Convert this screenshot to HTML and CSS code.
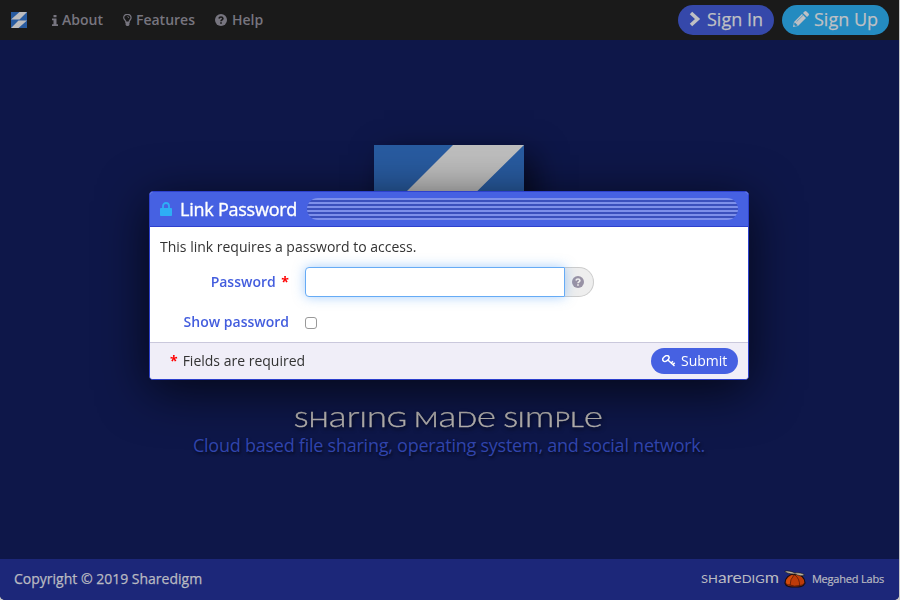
FILE: index.html
```html
<!DOCTYPE html>
<html lang="en">
<head>
<meta charset="utf-8">
<title>Sharedigm</title>
<link rel="stylesheet" href="styles.css">
</head>
<body>
<div class="page">
  <header class="navbar">
    <svg class="brand" viewBox="0 0 16 16"><rect width="16" height="16" fill="#285ba0"/><path d="M8.500 0H16L8.500 7.500H0zM7.500 8.500H16L7.500 16H0z" fill="#bcbcbe"/></svg>
    <nav class="menu">
      <a><svg class="i-info" viewBox="0 0 6 11"><path d="M1.500 0h3v2.200h-3zM0 3.500h4.500v5.800H6V11H0V9.300h1.500V5.200H0z"/></svg>About</a>
      <a><svg class="i-bulb" viewBox="0 0 9 12"><path d="M3 8.300C3 6.300.7 5.700.7 3.700a3.600 3.300 0 0 1 7.400 0C8.100 5.700 6 6.300 6 8.300z" fill="none" stroke="currentColor" stroke-width="1.200"/><path d="M2.600 7.700h3.800v3.200L5.300 12H3.700L2.600 10.900zM4.300 2.200q1.800 0 1.900 1.700h-.7Q5.300 3 4.300 3z"/></svg>Features</a>
      <a><svg class="i-help" viewBox="0 0 12 12"><circle cx="6" cy="6" r="6"/><path d="M4 4.500Q4.300 3 6 3t1.900 1.500C7.900 5.900 6 5.800 6 7.300M6 8.300v1.500" fill="none" stroke="#1a1a1a" stroke-width="1.700"/></svg>Help</a>
    </nav>
    <div class="actions">
      <a class="pill in"><svg class="i-chev" viewBox="0 0 12 16"><path d="M2 2l6.500 6L2 14" fill="none" stroke="currentColor" stroke-width="3.600"/></svg>Sign In</a>
      <a class="pill up"><svg class="i-pen" viewBox="0 0 16 16"><path d="M0 16l1-5L9 3l4 4-8 8zM10 2l1.500-1.500q1-1 2 0l2 2q1 1 0 2L14 6z"/><path d="M1.800 11.700l2.600 2.600-2 .6-1.200-1.200zM3.500 10.700L10 4.300" fill="#248bc0" stroke="#248bc0" stroke-width=".6"/></svg>Sign Up</a>
    </div>
  </header>

  <main class="hero">
    <svg class="logo" viewBox="0 0 150 150"><rect width="150" height="150" fill="#285ba0"/><path d="M79 0H150L75 74H5zM75 76H146L71 150H0z" fill="#bebebe"/></svg>
    <svg class="tagline" viewBox="0 0 312 32"><text x="1" y="23.500" textLength="309" lengthAdjust="spacingAndGlyphs"><tspan class="cap">Sh</tspan><tspan>ar</tspan><tspan class="cap">i</tspan><tspan>n</tspan><tspan class="cap">g</tspan><tspan class="cap"> M</tspan><tspan>a</tspan><tspan class="cap">d</tspan><tspan>e</tspan><tspan class="cap"> Si</tspan><tspan>m</tspan><tspan class="cap">pl</tspan><tspan>e</tspan></text></svg>
    <p class="sub">Cloud based file sharing, operating system, and social network.</p>
  </main>

  <footer class="footer">
    <span class="copy">Copyright © 2019 Sharedigm</span>
    <div class="credits">
      <svg class="wordmark" viewBox="0 0 80 16"><text x="1" y="12" textLength="78" lengthAdjust="spacingAndGlyphs"><tspan class="cap">Sh</tspan><tspan>are</tspan><tspan class="cap">dig</tspan><tspan>m</tspan></text></svg>
      <svg class="beanie" viewBox="0 0 22 18"><path d="M1 13C1 8 5 4 11 4s10 4 10 9c-2 4-5 4-10 4S2 17 1 13z" fill="#bd3b08" stroke="#150c10" stroke-width="1.200"/><path d="M2 12C3 8 6 6 10 5c-3 3-4 6-4 10q-3 0-4-3z" fill="#d24b0b"/><path d="M10 5Q6 9 6 15.500M11 5q5 4 4.500 11" fill="none" stroke="#491508" stroke-width=".7"/><path d="M1.500 13.500q2 2 4.500 1.500 4 2 9.500.5 3 0 5-2" fill="none" stroke="#491508" stroke-width=".8"/><path d="M11 3.500v1.800" stroke="#111" stroke-width="1.500"/><path d="M.8 1.200C4 .3 8 1.500 11 3c4-.6 8 .2 9.500 2-2 1.400-6 .8-9.500-1C7 4 2 3.300.8 1.200z" fill="#bbb29c" stroke="#171514" stroke-width=".6"/></svg>
      <span class="labs">Megahed Labs</span>
    </div>
  </footer>
</div>

<div class="overlay">
  <form class="modal">
    <div class="modal-head">
      <svg class="i-lock" viewBox="0 0 12 14"><path d="M3 7V4a3 3 0 0 1 6 0v3" fill="none" stroke="currentColor" stroke-width="1.800"/><rect y="6" width="12" height="8" rx=".8"/></svg>
      <h1>Link Password</h1>
      <div class="stripes"></div>
    </div>
    <div class="modal-body">
      <p>This link requires a password to access.</p>
      <div class="row">
        <label>Password <b class="req">*</b></label>
        <div class="group"><input class="field" type="password"><span class="addon"><svg class="i-help" viewBox="0 0 12 12"><circle cx="6" cy="6" r="6"/><path d="M4 4.500Q4.300 3 6 3t1.900 1.500C7.900 5.900 6 5.800 6 7.300M6 8.300v1.500" fill="none" stroke="#eee" stroke-width="1.700"/></svg></span></div>
      </div>
      <div class="row second">
        <label>Show password</label>
        <input class="check" type="checkbox">
      </div>
    </div>
    <div class="modal-foot">
      <span><b class="req">*</b>Fields are required</span>
      <button class="submit" type="button"><svg class="i-key" viewBox="0 0 14 12"><path d="M5.600 4.800L12.500 11M9.300 8l1.600-1.800M11 9.600l1.700-1.900" fill="none" stroke="currentColor" stroke-width="1.500"/><ellipse cx="3.900" cy="3.600" rx="3.500" ry="2.400" transform="rotate(-40 3.900 3.600)" fill="none" stroke="currentColor" stroke-width="1.500"/></svg>Submit</button>
    </div>
  </form>
</div>
</body>
</html>
```

FILE: styles.css
```css
* { box-sizing: border-box; }
html { background: #c9c9c9; }
body { margin: 0; font-family: "Open Sans", "Noto Sans", sans-serif; font-size: 14px; }
svg { fill: currentColor; flex: none; display: block; }
.page { width: 899px; height: 600px; display: flex; flex-direction: column; background: #0e1749; border-radius: 0 0 5px 5px; overflow: hidden; }
.navbar { height: 40px; background: #1a1a1a; display: flex; align-items: center; padding: 0 10px 0 11px; color: #77757f; }
.brand { width: 16px; height: 16px; }
.menu { display: flex; margin-left: 25px; gap: 20px; font-weight: 600; flex: 1; }
.menu a { display: flex; align-items: center; line-height: 20px; }
.i-info { width: 6px; height: 11px; margin-right: 4px; }
.i-bulb { width: 9px; height: 12px; margin-right: 4px; }
.i-help { width: 12px; height: 12px; }
.menu .i-help { margin-right: 5px; }
.actions { display: flex; gap: 8px; }
.pill { height: 30px; border-radius: 15px; display: flex; align-items: center; font-size: 18px; line-height: 26px; color: #bfc0c4; padding-bottom: 2px; -webkit-text-stroke: .25px #bfc0c4; }
.in { width: 96px; background: #3548aa; padding-left: 11px; }
.up { width: 107px; background: #248bc0; padding-left: 11px; }
.i-chev { width: 12px; height: 16px; margin-right: 6px; }
.i-pen { width: 16px; height: 16px; margin-right: 5px; }
.hero { flex: 1; width: 898px; display: flex; flex-direction: column; align-items: center; padding-top: 105px; }
.logo { width: 150px; height: 150px; box-shadow: 10px 10px 30px rgba(0,0,0,.6); }
.tagline { width: 312px; height: 32px; margin-top: 108px; filter: drop-shadow(1px 2px 2px rgba(0,0,0,.6)); overflow: visible; }
.tagline text { font-family: Lato, sans-serif; font-weight: 300; font-size: 29.5px; fill: #b8b5b2; stroke: #b8b5b2; stroke-width: .25px; }
.tagline .cap { font-size: 21.5px; text-transform: uppercase; stroke-width: .5px; }
.sub { margin: -3px 0 0; font-size: 18px; line-height: 26px; letter-spacing: -.24px; color: #3145ad; text-shadow: 1px 2px 3px rgba(0,0,0,.6); white-space: nowrap; }
.footer { height: 41px; background: #1c2779; color: #b9bac1; display: flex; justify-content: space-between; align-items: center; padding: 0 15px 2px 14px; }
.copy { -webkit-text-stroke: .25px #b9bac1; }
.credits { display: flex; align-items: center; }
.wordmark { width: 80px; height: 16px; overflow: visible; }
.wordmark text { font-family: Lato, sans-serif; font-size: 15.5px; }
.wordmark .cap { font-size: 11.5px; text-transform: uppercase; }
.beanie { width: 22px; height: 18px; margin: 0 6px 0 4px; }
.labs { font-size: 11px; font-weight: 500; -webkit-text-stroke: .2px #b9bac1; letter-spacing: -.2px; }
.overlay { position: fixed; top: 0; left: 0; width: 898px; height: 600px; display: flex; justify-content: center; align-items: flex-start; padding-top: 191px; }
.modal { width: 600px; height: 189px; border: 1px solid #2d40cd; border-radius: 4px; background: #fff; box-shadow: 0 10px 50px rgba(0,0,0,.7); overflow: hidden; color: #333; display: flex; flex-direction: column; }
.modal-head { height: 35px; background: #4661e2; border-bottom: 1px solid #2d40cd; display: flex; align-items: center; padding: 0 10px; color: #fff; }
.i-lock { width: 12px; height: 14px; color: #2eaff5; margin-right: 8px; }
h1 { margin: 0; font-size: 18px; line-height: 26px; font-weight: 400; letter-spacing: -.24px; -webkit-text-stroke: .35px #fff; white-space: nowrap; }
.stripes { flex: 1; height: 22px; margin-left: 10px; border-radius: 11px; background: repeating-linear-gradient(#7e90ea 0 2px, #3b50bd 2px 4px); }
.modal-body { flex: 1; padding: 10px 10px 0; }
.modal-body p { margin: 0 0 10px; line-height: 20px; }
.row { display: flex; align-items: center; height: 30px; }
.second { margin-top: 10px; }
label { width: 129px; text-align: right; margin-right: 16px; padding-bottom: 2px; color: #435dde; font-weight: 600; }
.req { color: #f00; font-weight: 700; }
label .req { margin-left: 2px; }
.group { display: flex; }
.field { width: 260px; height: 30px; border: 1px solid #66abf5; border-radius: 4px 0 0 4px; background: #fff; outline: 0; box-shadow: 0 0 12px rgba(80,160,250,.5); position: relative; }
.addon { width: 29px; height: 30px; border: 1px solid #ccc; border-left: 0; border-radius: 0 15px 15px 0; background: #eee; display: flex; align-items: center; padding-left: 7px; color: #9892a5; }
.check { appearance: none; width: 12px; height: 12px; margin: 2px 0 0; border: 1px solid #999; border-radius: 3px; background: #fff; }
.modal-foot { height: 37px; border-top: 1px solid #cac8dc; background: #f0eef8; display: flex; align-items: center; justify-content: space-between; padding: 0 10px 0 20px; }
.modal-foot > span { padding-bottom: 2px; }
.modal-foot .req { margin-right: 5px; }
.submit { width: 87px; height: 26px; border: 0; border-radius: 13px; background: #4661e2; color: #fff; font: 500 14px "Open Sans", sans-serif; display: flex; align-items: center; padding: 0 0 1px 11px; }
.i-key { width: 14px; height: 12px; margin-right: 5px; }
```
